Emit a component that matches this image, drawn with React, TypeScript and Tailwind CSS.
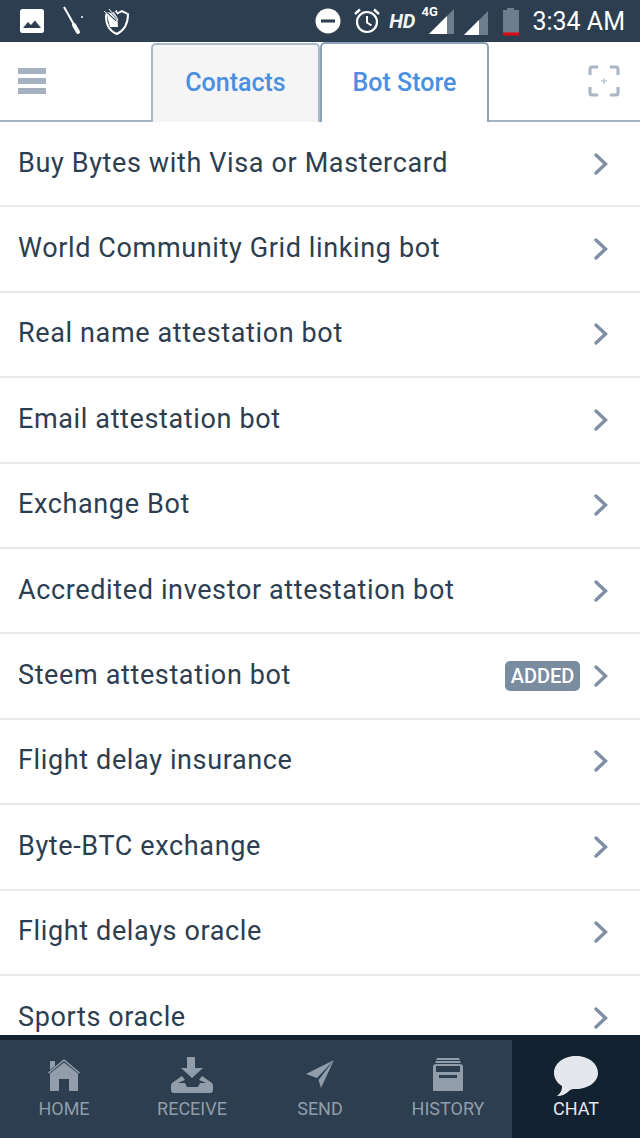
import React from "react";

const rows = [
  "Buy Bytes with Visa or Mastercard",
  "World Community Grid linking bot",
  "Real name attestation bot",
  "Email attestation bot",
  "Exchange Bot",
  "Accredited investor attestation bot",
  "Steem attestation bot",
  "Flight delay insurance",
  "Byte-BTC exchange",
  "Flight delays oracle",
  "Sports oracle",
];

function StatusBar() {
  return (
    <div className="h-[42px] shrink-0 bg-[#2c3e50] flex items-center text-white relative">
      <svg width="26" height="26" viewBox="0 0 26 26" className="ml-[19px]">
        <rect x="1" y="1" width="24" height="24" rx="2.5" fill="#fff" />
        <path d="M4 20 L9 14 L12 17 L16 12.5 L22 20 Z" fill="#2c3e50" />
      </svg>
      <svg width="24" height="30" viewBox="0 0 24 30" className="ml-[17px]">
        <path d="M2 1 L15 24" stroke="#fff" strokeWidth="2" />
        <path d="M12 19 L16 26" stroke="#fff" strokeWidth="4" strokeLinecap="round" />
        <circle cx="20" cy="11" r="1" fill="#fff" />
      </svg>
      <svg width="30" height="30" viewBox="0 0 30 30" className="ml-[14px]">
        <path d="M7 7 L14 9 L22 5 L28 8 C28 18 25 24 17 28 C9 25 6 18 6 10 Z" fill="none" stroke="#fff" strokeWidth="2" />
        <path d="M7 9 L17 4 L18 21 L10 21 Z" fill="#fff" />
        <path d="M4 4 L16 15 M8 2 L17 13 M12 2 L18 11" stroke="#2c3e50" strokeWidth="1.5" />
        <path d="M4 5 L16 16 M9 3 L18 14" stroke="#fff" strokeWidth="1" />
      </svg>
      <div className="ml-auto flex items-center h-full">
        <svg width="26" height="26" viewBox="0 0 26 26">
          <circle cx="13" cy="13" r="12.5" fill="#fff" />
          <rect x="6" y="11.5" width="14" height="3" fill="#2c3e50" />
        </svg>
        <svg width="28" height="28" viewBox="0 0 28 28" className="ml-[12px]">
          <circle cx="14" cy="15" r="10" fill="none" stroke="#fff" strokeWidth="2.2" />
          <path d="M14 9 V15.5 L18.5 18.5" fill="none" stroke="#fff" strokeWidth="2" />
          <path d="M2 7 L7 2.5 M26 7 L21 2.5" stroke="#fff" strokeWidth="2.4" />
        </svg>
        <span className="ml-[8px] text-[20px] font-bold italic text-[#f2f4f6] leading-none">HD</span>
        <div className="relative w-[38px] h-[30px] ml-[2px]">
          <span className="absolute left-[4px] top-[-1px] text-[13px] font-bold leading-none">4G</span>
          <svg width="26" height="27" viewBox="0 0 26 27" className="absolute right-0 bottom-0">
            <path d="M0 25 L25 0 V25 Z" fill="#6f7d8c" />
            <path d="M0 25 L18 7 V25 Z" fill="#fff" />
          </svg>
        </div>
        <svg width="26" height="26" viewBox="0 0 26 26" className="ml-[8px] mt-[3px]">
          <path d="M1 25 L25 1 V25 Z" fill="#6f7d8c" />
          <path d="M1 25 L16 10 V25 Z" fill="#fff" />
        </svg>
        <svg width="18" height="28" viewBox="0 0 18 28" className="ml-[13px] mt-[1px]">
          <path d="M5 0 H12 V2 H17 V25 H1 V2 H5 Z" fill="#6f7d8c" />
          <rect x="1" y="24.5" width="16" height="3" fill="#e30613" />
        </svg>
        <span className="ml-[12px] mr-[15px] text-[25px] leading-none text-white">3:34 AM</span>
      </div>
    </div>
  );
}

function Header() {
  return (
    <div className="h-[80px] shrink-0 bg-white flex items-end relative border-b-2 border-[#a5b4c4]">
      <div className="absolute left-[18px] top-[26px] w-[28px] flex flex-col gap-[4px]">
        <div className="h-[6px] bg-[#a5b1c0]" />
        <div className="h-[6px] bg-[#a5b1c0]" />
        <div className="h-[6px] bg-[#a5b1c0]" />
      </div>
      <div className="ml-[151px] w-[169px] h-[79px] mb-[-2px] pb-[2px] bg-[#f5f5f5] border-2 border-b-0 border-[#a9bacb] rounded-t-[5px] flex items-center justify-center text-[25px] font-medium text-[#4a90e2]">
        Contacts
      </div>
      <div className="w-[169px] h-[80px] mb-[-2px] bg-white border-2 border-b-0 border-[#8fa3b8] rounded-t-[5px] flex items-center justify-center text-[25px] font-medium text-[#4a90e2]">
        Bot Store
      </div>
      <svg width="32" height="32" viewBox="0 0 32 32" className="absolute left-[588px] top-[23px]">
        <path d="M2 10 V4 Q2 2 4 2 H10 M22 2 H28 Q30 2 30 4 V10 M30 22 V28 Q30 30 28 30 H22 M10 30 H4 Q2 30 2 28 V22" fill="none" stroke="#a9b5c3" strokeWidth="3" />
        <path d="M16 13 V19 M13 16 H19" stroke="#a9b5c3" strokeWidth="1" />
      </svg>
    </div>
  );
}

function Row({ label }: { label: string }) {
  return (
    <div className="h-[85.4px] shrink-0 flex items-center border-b-2 border-[#e9e9e9] pl-[18px] pr-[31px]">
      <span className="flex-1 pb-[1px] text-[27px] tracking-[0.63px] text-[#2c3e50] leading-none">{label}</span>
      {label === "Steem attestation bot" && (
        <span className="mr-[13px] h-[30px] w-[75px] rounded-[5px] bg-[#7a8ca0] text-white text-[20px] font-medium flex items-center justify-center leading-none">
          ADDED
        </span>
      )}
      <svg width="16" height="24" viewBox="0 0 16 24">
        <path d="M3 3 L12.5 12 L3 21" fill="none" stroke="#7f8fa3" strokeWidth="3.4" strokeLinecap="round" strokeLinejoin="miter" />
      </svg>
    </div>
  );
}

function NavItem({ label, active, children }: { label: string; active?: boolean; children: React.ReactNode }) {
  return (
    <div className={`w-[128px] flex flex-col items-center ${active ? "bg-[#132230] mt-[-5px] pt-[5px] text-[#e4e8ec]" : "text-[#919daa]"}`}>
      <div className="h-[46px] flex items-end justify-center mt-[6px]">{children}</div>
      <span className="text-[18px] leading-none mt-[8px]">{label}</span>
    </div>
  );
}

function Nav() {
  return (
    <div className="h-[103px] shrink-0 bg-[#2c3e50] border-t-[5px] border-[#132230] flex">
      <NavItem label="HOME">
        <svg width="32" height="32" viewBox="0 0 32 32" fill="currentColor" className="mb-[1px]">
          <path d="M0 13.5 L16 0 L32 13.5 L31 14.5 L16 2 L1 14.5 Z" />
          <path d="M2 2 H7 V7 L2 11 Z" />
          <path d="M2 14.5 L16 3.5 L30 14.5 V32 H21 V20 H11 V32 H2 Z" />
        </svg>
      </NavItem>
      <NavItem label="RECEIVE">
        <svg width="42" height="36" viewBox="0 0 42 36" fill="currentColor" className="mb-[-1px]">
          <path d="M16 0 H24 V11 H32 L21 21 L10 11 H16 Z" />
          <path d="M11 19 L14 23 L7 26 H14 L16 30 H27 L29 26 H35 L28 23 L31 19 L41 26 Q42 27 42 29 V33 Q42 36 39 36 H3 Q0 36 0 33 V29 Q0 27 1 26 Z" />
        </svg>
      </NavItem>
      <NavItem label="SEND">
        <svg width="28" height="28" viewBox="0 0 28 28" fill="currentColor" className="mb-[4px]">
          <path d="M0 14 L28 0 L11 18 Z" />
          <path d="M28 0 L12.5 20 L15 28 Z" />
        </svg>
      </NavItem>
      <NavItem label="HISTORY">
        <svg width="30" height="33" viewBox="0 0 30 33" fill="currentColor" className="mb-[1px]">
          <path d="M4 0 H26 L27 2 H3 Z" />
          <path d="M3 3 H27 L28 5 H2 Z" />
          <path fillRule="evenodd" d="M3 6 H27 Q30 6 30 9 V33 H0 V9 Q0 6 3 6 Z M3 8 V14 H27 V8 Z M6 17 V20 H24 V17 Z" />
        </svg>
      </NavItem>
      <NavItem label="CHAT" active>
        <svg width="44" height="41" viewBox="0 0 44 41" fill="currentColor" className="mb-[-5px]">
          <path d="M22 0 C34 0 44 7 44 17 C44 26 34 33 22 33 C19 33 17 33 15 35 C12 38 8 40 3 40 C7 37 8 34 8 30 C3 27 0 22 0 17 C0 7 10 0 22 0 Z" />
        </svg>
      </NavItem>
    </div>
  );
}

export default function App() {
  return (
    <div className="w-[640px] h-[1138px] flex flex-col overflow-hidden bg-white font-['Roboto',sans-serif]">
      <StatusBar />
      <Header />
      <div className="flex-1 min-h-0 overflow-hidden flex flex-col">
        {rows.map((r) => (
          <Row key={r} label={r} />
        ))}
      </div>
      <Nav />
    </div>
  );
}
